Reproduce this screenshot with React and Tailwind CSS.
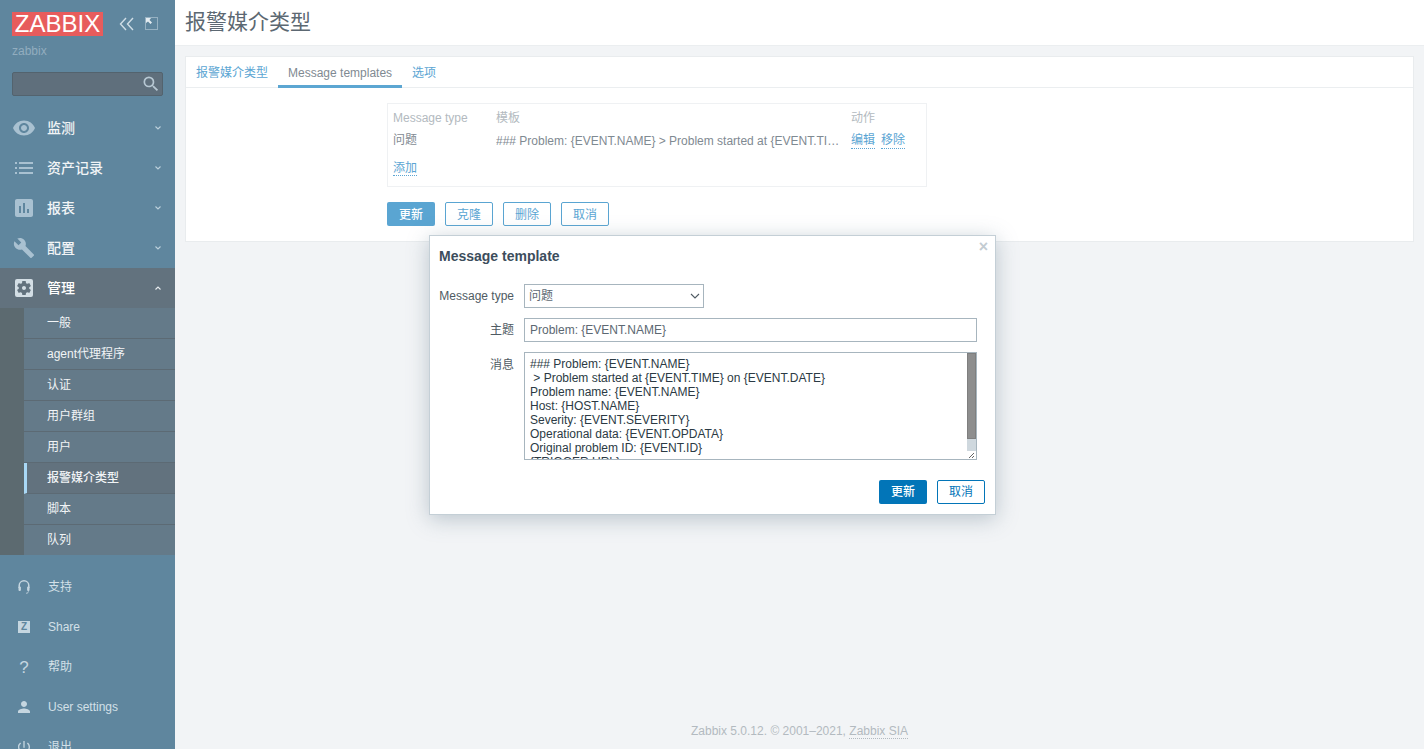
import { MdVisibility, MdAssessment, MdBuild, MdSettingsApplications, MdPerson, MdPowerSettingsNew, MdSearch } from "react-icons/md";

const font = "[font-family:'Liberation_Sans','Noto_Sans_CJK_SC',sans-serif]";

const ListIcon = () => (
  <svg width="20" height="20" viewBox="0 0 20 20" fill="#a9c1d1">
    <rect x="1" y="4" width="2" height="2" />
    <rect x="5" y="4" width="14" height="2" />
    <rect x="1" y="9" width="2" height="2" />
    <rect x="5" y="9" width="14" height="2" />
    <rect x="1" y="14" width="2" height="2" />
    <rect x="5" y="14" width="14" height="2" />
  </svg>
);

const Chevron = ({ up }) => (
  <svg width="6" height="4" viewBox="0 0 6 4" fill="none" stroke={up ? "#e8edf0" : "#bcd0dc"} strokeWidth="1.1" className="ml-auto mr-[14px]">
    <path d={up ? "M0.5 3.5L3 1l2.5 2.5" : "M0.5 0.5L3 3l2.5-2.5"} />
  </svg>
);

const HeadsetIcon = () => (
  <svg width="12" height="14" viewBox="0 0 12 14" fill="none">
    <path d="M1.2 8V5.6a4.8 4.8 0 0 1 9.6 0V8" stroke="#c5d6e0" strokeWidth="1.5" />
    <rect x="0.5" y="6.5" width="2.4" height="4.5" rx="1" fill="#c5d6e0" />
    <rect x="9.1" y="6.5" width="2.4" height="4.5" rx="1" fill="#c5d6e0" />
    <path d="M8 13.2h1.5l1-2" stroke="#c5d6e0" strokeWidth="0.8" />
  </svg>
);

const mainMenu = [
  { label: "监测", icon: <MdVisibility size={24} color="#a9c1d1" /> },
  { label: "资产记录", icon: <ListIcon /> },
  { label: "报表", icon: <MdAssessment size={24} color="#a9c1d1" /> },
  { label: "配置", icon: <MdBuild size={22} color="#a9c1d1" /> },
];

const subMenu = ["一般", "agent代理程序", "认证", "用户群组", "用户", "报警媒介类型", "脚本", "队列"];

const bottomMenu = [
  { label: "支持", icon: <HeadsetIcon /> },
  { label: "Share", icon: <span className="flex h-3 w-3 items-center justify-center bg-[#c5d6e0] text-[10px] font-bold leading-none text-[#5f869e]">Z</span> },
  { label: "帮助", icon: <span className="text-[17px] leading-none text-[#c5d6e0]">?</span> },
  { label: "User settings", icon: <MdPerson size={18} color="#c5d6e0" /> },
  { label: "退出", icon: <MdPowerSettingsNew size={16} color="#c5d6e0" /> },
];

function Sidebar() {
  return (
    <aside className="flex h-full w-[175px] shrink-0 flex-col overflow-hidden bg-[#5f869e]">
      <div className="flex h-[36px] shrink-0 items-end pl-[12px]">
        <div className="flex h-[24px] w-[91px] items-center justify-center bg-[#e75c5c] text-[24px] leading-none text-white">ZABBIX</div>
        <svg width="16" height="14" viewBox="0 0 16 14" fill="none" stroke="#cfdde6" strokeWidth="1.4" className="mb-[5px] ml-[16px]">
          <path d="M7 1L1.5 7 7 13M14 1L8.5 7 14 13" />
        </svg>
        <svg width="14" height="14" viewBox="0 0 14 14" fill="none" className="mb-[5px] ml-[10px]">
          <rect x="0.5" y="0.5" width="12" height="12" stroke="#cfdde6" strokeDasharray="1 1" />
          <path d="M1 1h5L4.5 3 7 5.5 5.5 7 3 4.5 1 6z" fill="#e4ecf1" />
        </svg>
      </div>
      <div className="mt-[8px] shrink-0 pl-[12px] text-[12px] leading-[14px] text-[#92adbf]">zabbix</div>
      <div className="mx-[12px] mt-[14px] flex h-[24px] shrink-0 items-center justify-end rounded-[2px] border border-[#53636e] bg-[#5f6f7c] pr-[1px]">
        <MdSearch size={20} color="#b7c8d3" />
      </div>
      <nav className="mt-[12px] shrink-0">
        {mainMenu.map((m) => (
          <div key={m.label} className="flex h-[40px] items-center">
            <span className="flex w-[47px] justify-center">{m.icon}</span>
            <span className="text-[14px] font-medium text-[#f1f4f6]">{m.label}</span>
            <Chevron />
          </div>
        ))}
        <div className="flex h-[40px] items-center bg-[#62727e]">
          <span className="flex w-[47px] justify-center"><MdSettingsApplications size={24} color="#d3dee5" /></span>
          <span className="text-[14px] font-medium text-white">管理</span>
          <Chevron up />
        </div>
        <div className="bg-[#5c6a70] pl-[24px]">
          {subMenu.map((s, i) => (
            <div
              key={s}
              className={
                "flex items-center text-[12px] text-[#f1f4f6] " +
                (i < 7 ? "h-[31px] border-b border-[#5c6a74] " : "h-[30px] ") +
                (i === 5 ? "border-l-[3px] border-l-[#a9d8f5] bg-[#62727e] pl-[20px] font-medium" : "bg-[#647a89] pl-[23px]")
              }
            >
              {s}
            </div>
          ))}
        </div>
      </nav>
      <div className="mt-[12px] shrink-0">
        {bottomMenu.map((b) => (
          <div key={b.label} className="flex h-[40px] items-center text-[12px] text-[#d3e0e8]">
            <span className="flex w-[48px] justify-center">{b.icon}</span>
            {b.label}
          </div>
        ))}
      </div>
    </aside>
  );
}

const Link = ({ children }) => (
  <span className="border-b border-dotted border-[#5ba5d3] text-[#5ba5d3]">{children}</span>
);

function Modal() {
  return (
    <div className="absolute left-[429px] top-[235px] h-[280px] w-[567px] border border-[#c4cfd6] bg-white pl-[9px] pr-[10px] shadow-[0_4px_20px_rgba(120,140,155,0.45)] text-[12px] text-[#4f5b63]">
      <span className="absolute right-[7px] top-[1px] text-[16px] font-bold leading-[20px] text-[#c3ccd2]">×</span>
      <h4 className="pt-[12px] text-[14px] font-bold leading-[16px] text-[#3c4d5c]">Message template</h4>
      <div className="mt-[20px] flex flex-col gap-[10px]">
        <div className="flex items-center gap-[10px]">
          <label className="w-[75px] text-right">Message type</label>
          <div className="relative">
            <select className="block h-[24px] w-[180px] appearance-none border border-[#a7b5be] bg-white pl-[4px] text-[12px] text-[#5c6872] outline-none">
              <option>问题</option>
            </select>
            <svg width="10" height="6" viewBox="0 0 10 6" fill="none" stroke="#4f5b63" strokeWidth="1.1" className="absolute right-[4px] top-[9px]">
              <path d="M1 1l4 4 4-4" />
            </svg>
          </div>
        </div>
        <div className="flex items-center gap-[10px]">
          <label className="w-[75px] text-right">主题</label>
          <input readOnly value="Problem: {EVENT.NAME}" className="h-[24px] w-[453px] border border-[#a7b5be] px-[5px] text-[12px] text-[#5c6872] outline-none" />
        </div>
        <div className="flex items-start gap-[10px]">
          <label className="w-[75px] pt-[4px] text-right">消息</label>
          <div className="relative h-[108px] w-[453px]">
            <textarea
              readOnly
              value={"### Problem: {EVENT.NAME}\n > Problem started at {EVENT.TIME} on {EVENT.DATE}\nProblem name: {EVENT.NAME}\nHost: {HOST.NAME}\nSeverity: {EVENT.SEVERITY}\nOperational data: {EVENT.OPDATA}\nOriginal problem ID: {EVENT.ID}\n{TRIGGER.URL}\n"}
              className="h-full w-full resize-none overflow-hidden border border-[#a7b5be] px-[5px] pt-[4px] text-[12px] leading-[14px] text-[#2b3a44] outline-none"
            />
            <div className="absolute right-[1px] top-[1px] flex h-[106px] w-[9px] flex-col">
              <div className="h-[86px] border border-[#7f7f7f] bg-[#8e8e8e]" />
              <div className="h-[12px] bg-[#cfd8de]" />
              <div className="relative flex-1 bg-white">
                <svg width="9" height="8" viewBox="0 0 9 8" stroke="#666" className="absolute inset-0"><path d="M2 7l5-5M5 7l2-2" /></svg>
              </div>
            </div>
          </div>
        </div>
      </div>
      <div className="mt-[20px] flex justify-end gap-[10px]">
        <button className="h-[24px] w-[48px] rounded-[2px] bg-[#0275b8] text-[12px] font-medium text-white">更新</button>
        <button className="h-[24px] w-[48px] rounded-[2px] border border-[#0275b8] text-[12px] text-[#0275b8]">取消</button>
      </div>
    </div>
  );
}

export default function App() {
  return (
    <div className={`relative flex h-[749px] overflow-hidden bg-[#f2f4f6] text-[12px] ${font}`}>
      <Sidebar />
      <main className="flex min-w-0 flex-1 flex-col">
        <header className="flex h-[46px] shrink-0 items-center border-b border-[#ebeef0] bg-white pb-[2px] pl-[10px] text-[21px] text-[#5c6872]">报警媒介类型</header>
        <section className="mx-[10px] mt-[10px] h-[186px] border border-[#e9ecee] bg-white">
          <div className="flex h-[31px] border-b border-[#ebeef0] text-[#5ba5d3]">
            <div className="flex h-[31px] items-center px-[10px]">报警媒介类型</div>
            <div className="flex h-[31px] items-center border-b-[3px] border-[#5ca6d2] px-[10px] pt-[3px] text-[#7f8a92]">Message templates</div>
            <div className="flex h-[31px] items-center px-[10px]">选项</div>
          </div>
          <div className="ml-[201px] mt-[15px] h-[84px] w-[540px] border border-[#eff1f3] pl-[5px]">
            <div className="flex h-[23px] items-end text-[#b3bac0]">
              <span className="w-[103px]">Message type</span>
              <span className="w-[355px]">模板</span>
              <span>动作</span>
            </div>
            <div className="flex h-[22px] items-end text-[#7f8a92]">
              <span className="w-[103px]">问题</span>
              <span className="w-[344px] truncate leading-[16px]">{"### Problem: {EVENT.NAME} > Problem started at {EVENT.TIME} on {EVENT.DATE}"}</span>
              <span className="ml-[11px] flex gap-[6px] leading-[16px]"><Link>编辑</Link><Link>移除</Link></span>
            </div>
            <div className="mt-[10px]"><Link>添加</Link></div>
          </div>
          <div className="ml-[201px] mt-[15px] flex gap-[10px]">
            <button className="h-[24px] w-[48px] rounded-[2px] bg-[#5aa5d2] pt-[1px] font-medium text-white">更新</button>
            {["克隆", "删除", "取消"].map((b) => (
              <button key={b} className="h-[24px] w-[48px] rounded-[2px] border border-[#5aa5d2] pt-[1px] text-[#5ba5d3]">{b}</button>
            ))}
          </div>
        </section>
        <footer className="mt-auto pb-[10px] text-center leading-[16px] text-[#b3bac0]">
          Zabbix 5.0.12. © 2001–2021, <span className="border-b border-dotted border-[#b3bac0]">Zabbix SIA</span>
        </footer>
      </main>
      <Modal />
    </div>
  );
}
